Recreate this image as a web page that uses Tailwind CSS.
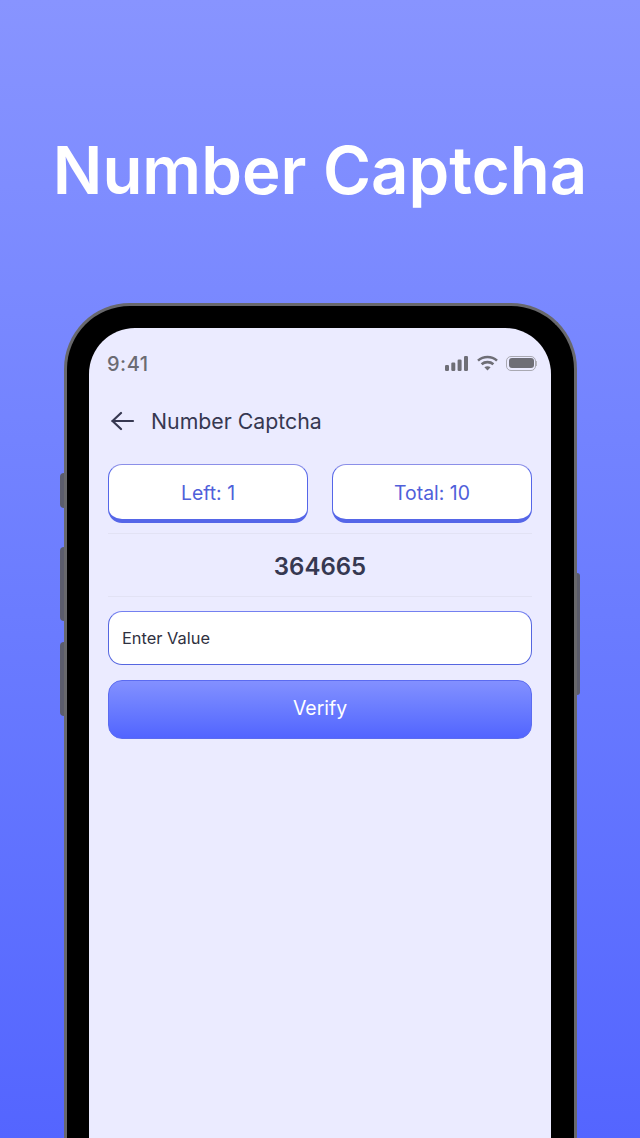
<!DOCTYPE html>
<html lang="en">
<head>
  <meta charset="UTF-8" />
  <meta name="viewport" content="width=device-width, initial-scale=1.0" />
  <title>Number Captcha</title>
  <script src="https://cdn.jsdelivr.net/npm/@tailwindcss/browser@4"></script>
</head>
<body class="font-['Inter',sans-serif]">
<div class="w-[640px] h-[1138px] overflow-hidden bg-gradient-to-b from-[#8894ff] to-[#5465ff]">

  <!-- Title -->
  <div class="h-[303px] pt-[133px] text-center">
    <h1 class="text-[65.3px] leading-[76px] font-semibold text-white whitespace-nowrap">Number Captcha</h1>
  </div>

  <!-- Phone -->
  <div class="relative ml-[64px] w-[513px] h-[900px]">
    <!-- side buttons -->
    <div class="absolute left-[-4px] top-[170px] w-[4px] h-[35px] rounded-l-sm bg-[#5b5c6c]"></div>
    <div class="absolute left-[-4px] top-[244px] w-[4px] h-[74px] rounded-l-sm bg-[#5b5c6c]"></div>
    <div class="absolute left-[-4px] top-[339px] w-[4px] h-[74px] rounded-l-sm bg-[#5b5c6c]"></div>
    <div class="absolute right-[-3px] top-[270px] w-[3px] h-[122px] rounded-r-sm bg-[#5b5c6c]"></div>

    <div class="h-full rounded-t-[66px] border-[3px] border-b-0 border-[#68686c] bg-black pt-[22px] pl-[22px] pr-[23px]">
      <div class="h-full rounded-t-[46px] bg-[#ebebff] px-[19px]">

        <!-- Status bar -->
        <div class="h-[58px] pt-[24px] flex justify-between items-start">
          <span class="text-[20px] leading-[24px] font-medium text-[#6b6b73] tracking-[0.5px] -ml-[1px]">9:41</span>
          <div class="flex items-center gap-[8px] h-[24px] -mr-[5px] -mt-[1px]">
            <svg width="24" height="15" viewBox="0 0 24 15" fill="#6e6e76">
              <rect x="0" y="9" width="4" height="6" rx="1.2" />
              <rect x="6.3" y="6.5" width="4" height="8.5" rx="1.2" />
              <rect x="12.6" y="3.5" width="4" height="11.5" rx="1.2" />
              <rect x="19" y="0" width="4" height="15" rx="1.2" />
            </svg>
            <svg width="21" height="16" viewBox="0 0 21 16" fill="none" stroke="#6e6e76" stroke-width="2.6">
              <path d="M1 5.6C6.4 .8 14.6 .8 20 5.6" />
              <path d="M4.6 9.2C7.9 6.4 13.1 6.4 16.4 9.2" />
              <path d="M10.5 15.6 7.4 12.3C9.2 10.9 11.8 10.9 13.6 12.3Z" fill="#6e6e76" stroke="none" />
            </svg>
            <div class="flex items-center">
              <div class="w-[30px] h-[15px] rounded-[5px] border border-[#a9a9b2] p-[1.5px]">
                <div class="w-full h-full rounded-[3px] bg-[#6e6e76]"></div>
              </div>
              <div class="w-[1px] h-[5px] bg-[#b5b5bd]"></div>
            </div>
          </div>
        </div>

        <!-- Header -->
        <div class="h-[78px] pb-[9px] flex items-center gap-[16px]">
          <svg class="ml-[3px]" width="24" height="20" viewBox="0 0 24 20" fill="none" stroke="#363851" stroke-width="2.2" stroke-linecap="round" stroke-linejoin="round">
            <path d="M22 10H1.5" />
            <path d="M10 2 1.5 10l8.5 8" />
          </svg>
          <span class="text-[21.3px] leading-[28px] font-normal text-[#363851] whitespace-nowrap">Number Captcha</span>
        </div>

        <!-- Counters -->
        <div class="flex gap-[24px]">
          <div class="flex-1 h-[59px] pt-[3px] rounded-[14px] border border-b-[4px] border-[#5566e8] border-t-[#8b8fe8] bg-white flex items-center justify-center text-[19.4px] text-[#5060da]">Left: 1</div>
          <div class="flex-1 h-[59px] pt-[3px] rounded-[14px] border border-b-[4px] border-[#5566e8] border-t-[#8b8fe8] bg-white flex items-center justify-center text-[19.4px] text-[#5060da]">Total: 10</div>
        </div>

        <!-- Captcha value -->
        <div class="mt-[10px] h-[64px] pt-[3px] border-y border-[#e2e2f4] flex items-center justify-center text-[24px] font-semibold text-[#363851]">364665</div>

        <!-- Input -->
        <div class="mt-[14px] h-[54px] rounded-[14px] border border-[#5566e0] border-t-[#7480f0] bg-white px-[13px] flex items-center text-[16.4px] text-[#2f3040]">Enter Value</div>

        <!-- Button -->
        <div class="mt-[15px] h-[59px] pb-[1px] rounded-[14px] border border-[#5b6bf0] bg-gradient-to-b from-[#8390ff] to-[#5264ff] flex items-center justify-center text-[19.4px] font-normal text-white">Verify</div>

      </div>
    </div>
  </div>
</div>
</body>
</html>
